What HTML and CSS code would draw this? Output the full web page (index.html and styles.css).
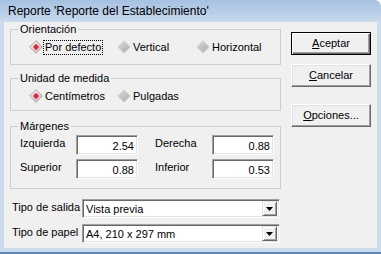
FILE: index.html
```html
<!DOCTYPE html>
<html lang="es">
<head>
<meta charset="utf-8">
<title>Reporte</title>
<link rel="stylesheet" href="styles.css">
</head>
<body>
<div class="window">
  <div class="titlebar">Reporte 'Reporte del Establecimiento'</div>
  <div class="client">
    <div class="main">
      <fieldset class="group g1">
        <legend>Orientación</legend>
        <div class="radios">
          <div class="radio">
            <svg class="rb" viewBox="0 0 14 14" width="14" height="14"><defs><linearGradient id="s1" x1="0" y1="0" x2="1" y2="1"><stop offset="0" stop-color="#ffffff"/><stop offset="1" stop-color="#c4b4b6"/></linearGradient><linearGradient id="u1" x1="0" y1="0" x2="1" y2="1"><stop offset="0" stop-color="#dcdcdc"/><stop offset="1" stop-color="#a8a8a8"/></linearGradient></defs><polygon points="7,0.7 13.3,7 7,13.3 0.7,7" fill="url(#s1)" stroke="#a4a4a4"/><polygon points="7,3.8 10.2,7 7,10.2 3.8,7" fill="#e0283a"/></svg>
            <span class="lbl focus">Por defecto</span>
          </div>
          <div class="radio">
            <svg class="rb" viewBox="0 0 14 14" width="14" height="14"><polygon points="7,0.7 13.3,7 7,13.3 0.7,7" fill="url(#u1)" stroke="#d4d4d4"/></svg>
            <span class="lbl">Vertical</span>
          </div>
          <div class="radio">
            <svg class="rb" viewBox="0 0 14 14" width="14" height="14"><polygon points="7,0.7 13.3,7 7,13.3 0.7,7" fill="url(#u1)" stroke="#d4d4d4"/></svg>
            <span class="lbl">Horizontal</span>
          </div>
        </div>
      </fieldset>
      <fieldset class="group g2">
        <legend>Unidad de medida</legend>
        <div class="radios">
          <div class="radio">
            <svg class="rb" viewBox="0 0 14 14" width="14" height="14"><polygon points="7,0.7 13.3,7 7,13.3 0.7,7" fill="url(#s1)" stroke="#a4a4a4"/><polygon points="7,3.8 10.2,7 7,10.2 3.8,7" fill="#e0283a"/></svg>
            <span class="lbl">Centímetros</span>
          </div>
          <div class="radio">
            <svg class="rb" viewBox="0 0 14 14" width="14" height="14"><polygon points="7,0.7 13.3,7 7,13.3 0.7,7" fill="url(#u1)" stroke="#d4d4d4"/></svg>
            <span class="lbl">Pulgadas</span>
          </div>
        </div>
      </fieldset>
      <fieldset class="group g3">
        <legend>Márgenes</legend>
        <div class="margins">
          <span class="mlbl">Izquierda</span><div class="edit">2.54</div>
          <span class="mlbl gap">Derecha</span><div class="edit">0.88</div>
          <span class="mlbl">Superior</span><div class="edit">0.88</div>
          <span class="mlbl gap">Inferior</span><div class="edit">0.53</div>
        </div>
      </fieldset>
      <div class="field f1">
        <span class="flbl">Tipo de salida</span>
        <div class="combo"><span class="ctext">Vista previa</span><span class="dd"><svg viewBox="0 0 7 4" width="7" height="4"><polygon points="0,0 7,0 3.5,4" fill="#000"/></svg></span></div>
      </div>
      <div class="field f2">
        <span class="flbl">Tipo de papel</span>
        <div class="combo"><span class="ctext">A4, 210 x 297 mm</span><span class="dd"><svg viewBox="0 0 7 4" width="7" height="4"><polygon points="0,0 7,0 3.5,4" fill="#000"/></svg></span></div>
      </div>
    </div>
    <div class="buttons">
      <div class="btn default"><span><u>A</u>ceptar</span></div>
      <div class="btn b2"><span><u>C</u>ancelar</span></div>
      <div class="btn b3"><span><u>O</u>pciones...</span></div>
    </div>
  </div>
</div>
</body>
</html>
```
FILE: styles.css
```css
* { box-sizing: border-box; }
html, body { margin: 0; padding: 0; }
body {
  width: 381px;
  height: 254px;
  overflow: hidden;
  background: #ffffff;
  font-family: "Liberation Sans", Arial, sans-serif;
  font-size: 11px;
  color: #000;
}
.window {
  width: 381px;
  height: 254px;
  display: flex;
  flex-direction: column;
  background: #cddcec;
  border-radius: 0 7px 0 0;
  border-bottom: 2px solid #5a86b8;
}
.titlebar {
  height: 22px;
  padding: 4px 0 0 8px;
  font-size: 12px;
  line-height: 14px;
  background: linear-gradient(#a6c1e1, #c4d7ec 20px, #cddcec);
  border-radius: 0 7px 0 0;
  white-space: nowrap;
}
.client {
  flex: 1;
  margin: 0 4px 4px 4px;
  background: #f0f0f0;
  display: flex;
  padding: 1px 6px 0 6px;
  gap: 10px;
}
.main {
  width: 271px;
  display: flex;
  flex-direction: column;
}
.group {
  margin: 0;
  padding: 0;
  border: 1px solid #c9ced2;
  min-width: 0;
}
.group legend {
  margin-left: 7px;
  padding: 0 2px;
  line-height: 13px;
  height: 13px;
}
.g1 { padding: 3px 0 9px 0; }
.g2 { margin-top: 7px; padding: 3px 0 6px 0; }
.g3 { margin-top: 9px; padding: 2px 6px 9px 9px; }
.g3 legend { margin-left: -2px; }
.radios {
  display: grid;
  grid-template-columns: 88px 79px auto;
  height: 16px;
  padding-left: 18px;
}
.radio {
  display: flex;
  align-items: center;
  height: 16px;
}
.rb { flex: none; margin-right: 1px; }
.lbl { line-height: 13px; padding: 0 1px; }
.focus { outline: 1px dotted #000; outline-offset: 0; }
.margins {
  display: grid;
  grid-template-columns: 56px 62px 74px 62px;
  row-gap: 4px;
}
.mlbl { line-height: 13px; padding-top: 2px; }
.mlbl.gap { padding-left: 17px; }
.edit, .combo {
  height: 20px;
  background: #fff;
  border: 1px solid;
  border-color: #a0a0a0 #ffffff #ffffff #a0a0a0;
  box-shadow: inset 1px 1px 0 #696969, inset -1px -1px 0 #e3e3e3;
}
.edit {
  text-align: right;
  padding: 4px 3px 0 0;
  line-height: 13px;
}
.field {
  display: flex;
  align-items: flex-start;
}
.f1 { margin-top: 10px; }
.f2 { margin-top: 6px; }
.flbl {
  width: 72px;
  padding: 2px 0 0 2px;
  line-height: 13px;
}
.combo {
  width: 198px;
  height: 19px;
  display: flex;
  align-items: center;
  padding: 0 2px 0 3px;
}
.ctext { flex: 1; line-height: 13px; padding-top: 1px; }
.dd {
  width: 15px;
  height: 15px;
  background: #f0f0f0;
  border: 1px solid;
  border-color: #e3e3e3 #696969 #696969 #e3e3e3;
  box-shadow: inset 1px 1px 0 #fff, inset -1px -1px 0 #a0a0a0;
  display: flex;
  align-items: center;
  justify-content: center;
}
.dd svg { display: block; }
.buttons {
  width: 80px;
  display: flex;
  flex-direction: column;
  padding-top: 9px;
}
.btn {
  height: 23px;
  display: flex;
  align-items: center;
  justify-content: center;
  background: #f0f0f0;
  border: 1px solid;
  border-color: #ffffff #696969 #696969 #ffffff;
  box-shadow: inset -1px -1px 0 #a0a0a0, inset 1px 1px 0 #e3e3e3;
  line-height: 13px;
}
.btn.default {
  border: 1px solid #000;
  box-shadow: inset 1px 1px 0 #fff, inset -1px -1px 0 #696969, inset -2px -2px 0 #a0a0a0;
}
.b2 { margin-top: 9px; }
.b3 { margin-top: 17px; }
```
